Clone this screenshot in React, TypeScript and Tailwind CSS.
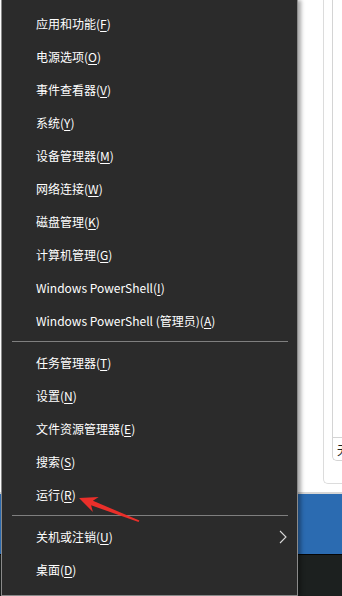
import React from 'react';

type Item = { label: string; key: string; suffix?: string; sub?: boolean };

const groups: Item[][] = [
  [
    { label: '应用和功能', key: 'F' },
    { label: '电源选项', key: 'O' },
    { label: '事件查看器', key: 'V' },
    { label: '系统', key: 'Y' },
    { label: '设备管理器', key: 'M' },
    { label: '网络连接', key: 'W' },
    { label: '磁盘管理', key: 'K' },
    { label: '计算机管理', key: 'G' },
    { label: 'Windows PowerShell', key: 'I' },
    { label: 'Windows PowerShell (管理员)', key: 'A' },
  ],
  [
    { label: '任务管理器', key: 'T' },
    { label: '设置', key: 'N' },
    { label: '文件资源管理器', key: 'E' },
    { label: '搜索', key: 'S' },
    { label: '运行', key: 'R' },
  ],
  [
    { label: '关机或注销', key: 'U', sub: true },
    { label: '桌面', key: 'D' },
  ],
];

function MenuRow({ item }: { item: Item }) {
  return (
    <div className="h-[33px] flex items-center justify-between pl-[34px] pr-[10px] text-white text-[12px] leading-none">
      <span>
        {item.label}(<span className="underline underline-offset-[2px]">{item.key}</span>)
      </span>
      {item.sub && (
        <svg width="8" height="14" viewBox="0 0 8 14" fill="none">
          <path d="M1 1l6 6-6 6" stroke="#d8d8d8" strokeWidth="1.1" />
        </svg>
      )}
    </div>
  );
}

// backdrop column: white window, blue bar, dark taskbar
function Backdrop({ children, className = '' }: { children?: React.ReactNode; className?: string }) {
  return (
    <div className={`flex flex-col h-[596px] ${className}`}>
      <div className="h-[492px] bg-white relative overflow-hidden">{children}</div>
      <div className="h-[2px] bg-[#d6d6d6]" />
      <div className="h-[60px] bg-[#2b6bb1]" />
      <div className="h-px bg-[#050505]" />
      <div className="flex-1 bg-[#1c201f]" />
    </div>
  );
}

export default function App() {
  return (
    <div className="w-[342px] h-[596px] flex overflow-hidden font-['Microsoft_YaHei_UI','Noto_Sans_CJK_SC',sans-serif]">
      <Backdrop className="w-px shrink-0" />

      {/* Win+X menu */}
      <div className="w-[297px] shrink-0 h-[596px] bg-[#2b2b2b] border-l border-r border-b border-[#8a8a8a] pt-[7px] relative z-10 shadow-[3px_0_4px_rgba(0,0,0,0.35)]">
        {groups.map((g, gi) => (
          <div key={gi}>
            {gi > 0 && (
              <div className="h-[9px] flex items-center ml-[10px] mr-[9px]">
                <div className="h-px w-full bg-[#7f7f7f]" />
              </div>
            )}
            {g.map((it) => (
              <MenuRow key={it.key} item={it} />
            ))}
          </div>
        ))}

        {/* red annotation arrow */}
        <svg className="absolute left-[-1px] top-0 pointer-events-none" width="300" height="596">
          <polygon
            points="78,498 97.7,497 91.9,500.7 138.4,520.6 137.6,522 90.1,505.3 91.9,512"
            fill="#ea2f2a"
          />
        </svg>
      </div>

      <Backdrop className="flex-1">
        <div className="ml-[25px] h-[484px] border-l border-b border-[#dcdcdc] rounded-bl-[5px] pl-[8px]">
          <div className="h-[461px] border-l border-b border-[#d4d4d4] rounded-bl-[5px] flex flex-col">
            <div className="h-[371px]" />
            <div className="ml-[9px] w-px h-px bg-[#e08a3a]" />
            <div className="h-[10px]" />
            <div className="ml-[9px] w-px h-px bg-[#e08a3a]" />
            <div className="h-[54px]" />
            <div className="flex-1 border-t border-[#d4d4d4] pl-[4px] pt-[6px] text-[12px] leading-none text-[#222]">
              无
            </div>
          </div>
        </div>
      </Backdrop>
    </div>
  );
}
